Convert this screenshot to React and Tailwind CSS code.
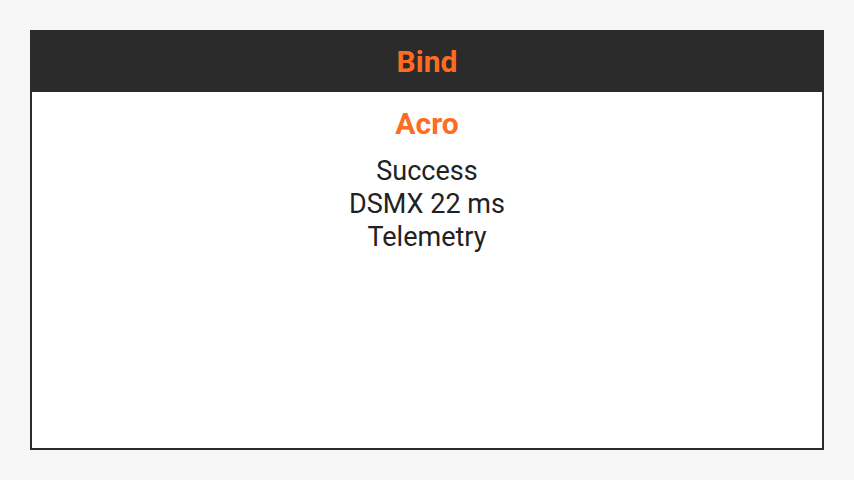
import React from "react";

function App() {
  return (
    <div className="w-[854px] h-[480px] bg-[#f7f7f7] p-[30px]" style={{ fontFamily: "Roboto, sans-serif" }}>
      <div className="h-[420px] border-2 border-[#2b2b2b] bg-white flex flex-col">
        <div className="h-[60px] bg-[#2b2b2b] flex items-center justify-center">
          <span className="text-[30px] leading-[36px] font-bold text-[#ff6b22]">Bind</span>
        </div>
        <div className="flex flex-col items-center pt-[14px]">
          <span className="text-[30px] leading-[36px] font-bold text-[#ff6b22]">Acro</span>
          <div className="mt-[13px] flex flex-col items-center text-[27px] leading-[33px] text-[#222]">
            <span>Success</span>
            <span>DSMX 22 ms</span>
            <span>Telemetry</span>
          </div>
        </div>
      </div>
    </div>
  );
}

export default App;
